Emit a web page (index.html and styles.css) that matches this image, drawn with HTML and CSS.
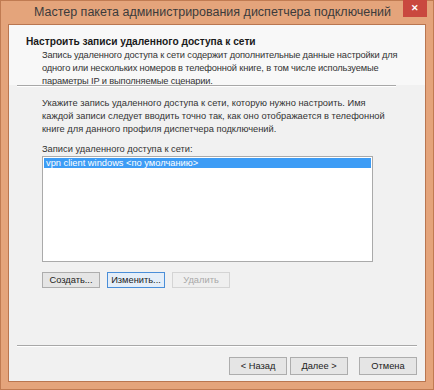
FILE: index.html
```html
<!DOCTYPE html>
<html>
<head>
<meta charset="utf-8">
<link rel="stylesheet" href="styles.css">
</head>
<body>
<div class="window">
  <div class="titlebar">
    <div class="title">Мастер пакета администрирования диспетчера подключений</div>
    <div class="close">&#x2715;</div>
  </div>
  <div class="client">
    <div class="header">
      <div class="heading">Настроить записи удаленного доступа к сети</div>
      <div class="desc">Запись удаленного доступа к сети содержит дополнительные данные настройки для одного или нескольких номеров в телефонной книге, в том числе используемые параметры IP и выполняемые сценарии.</div>
    </div>
    <div class="rule top-rule"></div>
    <div class="body">
      <p class="intro">Укажите запись удаленного доступа к сети, которую нужно настроить. Имя каждой записи следует вводить точно так, как оно отображается в телефонной книге для данного профиля диспетчера подключений.</p>
      <div class="label">Записи удаленного доступа к сети:</div>
      <div class="listbox">
        <div class="item selected">vpn client windows &lt;по умолчанию&gt;</div>
      </div>
      <div class="list-buttons">
        <div class="btn">Создать...</div>
        <div class="btn focused">Изменить...</div>
        <div class="btn disabled">Удалить</div>
      </div>
    </div>
    <div class="rule bottom-rule"></div>
    <div class="footer">
      <div class="btn">&lt; Назад</div>
      <div class="btn">Далее &gt;</div>
      <div class="btn cancel">Отмена</div>
    </div>
  </div>
</div>
</body>
</html>
```

FILE: styles.css
```css
html, body { margin: 0; padding: 0; background: #d28f64; font-family: "Liberation Sans", Arial, sans-serif; }
.window { width: 434px; height: 390px; box-sizing: border-box; padding: 0 7px 7px 7px; background: #e4a47b; border: 1px solid #c07b52; display: flex; flex-direction: column; }
.titlebar { height: 23px; display: flex; align-items: flex-start; position: relative; }
.title { flex: 1; text-align: center; font-size: 12.5px; color: #3b3b3b; line-height: 23px; padding-left: 14px; }
.close { width: 24px; height: 17px; background: #c9483f; color: #fff; font-size: 9px; line-height: 17px; text-align: center; font-weight: bold; margin-top: -1px; margin-right: -1px; }
.client { flex: 1; background: #f1f1f1; display: flex; flex-direction: column; border: 1px solid #b97650; }
.header { background: #f8f8f8; padding: 10px 0 0 17px; height: 50px; }
.heading { font-weight: bold; font-size: 10.2px; color: #1a1a1a; line-height: 13px; }
.desc { font-size: 9.3px; letter-spacing: -0.15px; color: #333; line-height: 13px; padding-left: 16px; padding-right: 8px; margin-top: 1px; }
.rule { height: 1px; background: #a8a8a8; border-bottom: 1px solid #fff; }
.top-rule { margin: 0 29px 0 8px; }
.body { padding: 10px 0 0 33px; height: 258px; box-sizing: border-box; }
.intro { margin: 0; font-size: 9.3px; color: #333; line-height: 13px; padding-right: 40px; }
.label { font-size: 9.3px; color: #333; margin-top: 7px; line-height: 13px; }
.listbox { width: 331px; height: 106px; background: #fff; border: 1px solid #aaa; box-sizing: border-box; margin-top: 0; padding: 1px; }
.item { font-size: 9.3px; line-height: 10px; height: 10px; color: #fff; padding-left: 2px; }
.selected { background: #3d9cf5; }
.list-buttons { display: flex; gap: 7px; margin-top: 10px; }
.btn { width: 58px; height: 16px; box-sizing: border-box; border: 1px solid #adadad; background: #e5e5e5; font-size: 9.3px; color: #222; text-align: center; line-height: 14px; }
.btn.focused { border-color: #4a8ed8; background: #e4eef9; }
.btn.disabled { color: #a8a8a8; border-color: #d4d4d4; background: #efefef; }
.bottom-rule { margin: 0 8px 0 8px; }
.footer { display: flex; justify-content: flex-end; gap: 3px; padding: 10px 8px 0 0; }
.footer .btn { height: 18px; line-height: 16px; }
.footer .cancel { margin-left: 8px; }
```
